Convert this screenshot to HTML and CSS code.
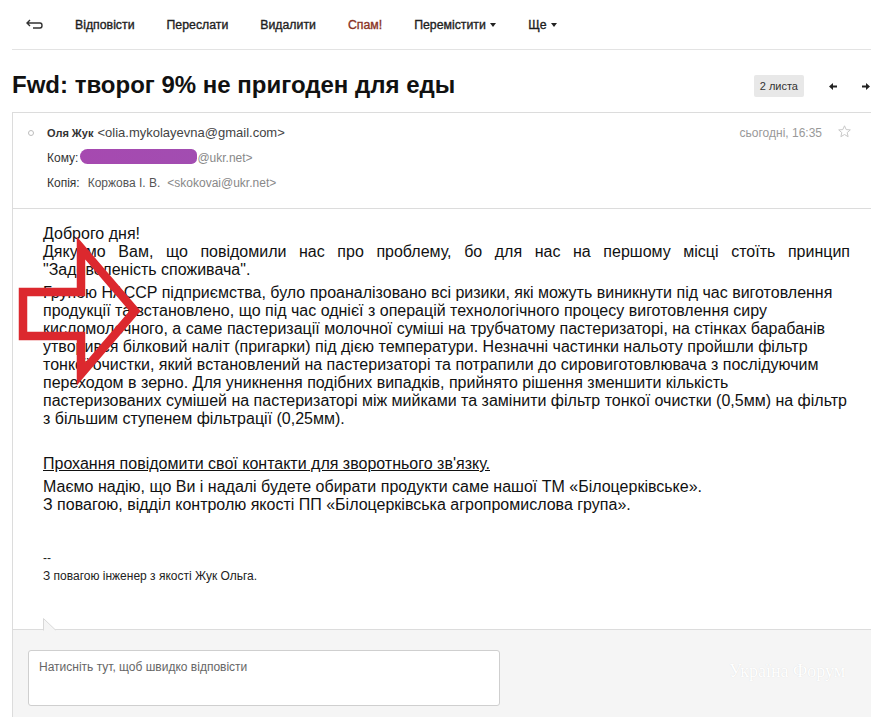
FILE: index.html
```html
<!DOCTYPE html>
<html lang="uk">
<head>
<meta charset="utf-8">
<title>Fwd: творог 9% не пригоден для еды</title>
<link rel="stylesheet" href="styles.css">
</head>
<body>
<div class="page">
  <div class="toolbar">
    <span class="back"><svg width="17" height="11" viewBox="0 0 17 11"><path d="M4 1 L1 4 L4 7 M1 4 H14 Q16 4 16 6.5 Q16 9 14 9 H7" fill="none" stroke="#333" stroke-width="1.4"/></svg></span>
    <span class="tb">Відповісти</span>
    <span class="tb">Переслати</span>
    <span class="tb">Видалити</span>
    <span class="tb spam">Спам!</span>
    <span class="tb">Перемістити <i class="caret"></i></span>
    <span class="tb">Ще <i class="caret"></i></span>
  </div>

  <div class="titlebar">
    <h1 class="title">Fwd: творог 9% не пригоден для еды</h1>
    <span class="count">2 листа</span>
    <span class="nav"><svg width="8" height="7" viewBox="0 0 8 7"><path d="M0 3.5 L4 0 V2.6 H8 V4.4 H4 V7 Z" fill="#222"/></svg></span>
    <span class="nav nav-next"><svg width="8" height="7" viewBox="0 0 8 7"><path d="M8 3.5 L4 0 V2.6 H0 V4.4 H4 V7 Z" fill="#222"/></svg></span>
  </div>

  <div class="card">
    <div class="head">
      <div class="row">
        <span class="dot"></span>
        <b class="from">Оля Жук</b>
        <span class="addr">&lt;olia.mykolayevna@gmail.com&gt;</span>
        <span class="date">сьогодні, 16:35</span>
        <span class="star"><svg width="13" height="13" viewBox="0 0 13 13"><path d="M6.5 0.8 L8.2 4.6 L12.3 4.9 L9.2 7.6 L10.1 11.7 L6.5 9.5 L2.9 11.7 L3.8 7.6 L0.7 4.9 L4.8 4.6 Z" fill="none" stroke="#c8c8c8" stroke-width="1"/></svg></span>
      </div>
      <div class="row sub">
        <span class="label">Кому:</span><span class="blob"></span><span class="muted">@ukr.net&gt;</span>
      </div>
      <div class="row sub">
        <span class="label">Копія:</span><span class="cc">Коржова І. В.</span><span class="muted">&lt;skokovai@ukr.net&gt;</span>
      </div>
    </div>

    <div class="msg">
      <p class="para just">Доброго дня!<br>Дякуємо Вам, що повідомили нас про проблему, бо для нас на першому місці стоїть принцип "Задоволеність споживача".</p>
      <p class="para gap nowrap">Групою HACCP підприємства, було проаналізовано всі ризики, які можуть виникнути під час виготовлення<br>продукції та встановлено, що під час однієї з операцій технологічного процесу виготовлення сиру<br>кисломолочного, а саме пастеризації молочної суміші на трубчатому пастеризаторі, на стінках барабанів<br>утворився білковий наліт (пригарки) під дією температури. Незначні частинки нальоту пройшли фільтр<br>тонкої очистки, який встановлений на пастеризаторі та потрапили до сировиготовлювача з послідуючим<br>переходом в зерно. Для уникнення подібних випадків, прийнято рішення зменшити кількість<br>пастеризованих сумішей на пастеризаторі між мийками та замінити фільтр тонкої очистки (0,5мм) на фільтр<br>з більшим ступенем фільтрації (0,25мм).</p>
      <p class="para request"><u>Прохання повідомити свої контакти для зворотнього зв'язку.</u></p>
      <p class="para gap">Маємо надію, що Ви і надалі будете обирати продукти саме нашої ТМ «Білоцерківське».<br>З повагою, відділ контролю якості ПП «Білоцерківська агропромислова група».</p>
      <p class="sig">--<br>З повагою інженер з якості Жук Ольга.</p>

      <svg class="mark" width="140" height="150" viewBox="10 235 140 150"><path d="M23 291 H81 V247 L135 310 L81 373 V335 H23 Z" fill="none" stroke="#dc282e" stroke-width="8.5" stroke-linejoin="miter"/></svg>
    </div>

    <div class="reply">
      <svg class="notch" width="13" height="13" viewBox="0 0 13 13"><path d="M0.5 13 V0.5 L12.5 12 V13 Z" fill="#f5f5f5"/><path d="M0.5 12.5 V0.5 L12.5 12" fill="none" stroke="#d8d8d8" stroke-width="1"/></svg>
      <div class="box">Натисніть тут, щоб швидко відповісти</div>
      <span class="watermark">Україна Форум</span>
    </div>
  </div>
</div>
</body>
</html>
```

FILE: styles.css
```css
html, body {
  margin: 0;
  padding: 0;
  background: #fff;
}

body {
  font-family: "Liberation Sans", Arial, sans-serif;
  color: #222;
}

.page {
  position: relative;
  width: 871px;
  height: 717px;
  overflow: hidden;
}

/* toolbar */
.toolbar {
  margin-left: 12px;
  height: 49px;
  border-bottom: 1px solid #e3e3e3;
  display: flex;
  align-items: center;
  gap: 32px;
  padding-left: 14px;
  font-size: 12.3px;
  color: #1e1e1e;
  -webkit-text-stroke: 0.35px #1e1e1e;
}

.back {
  display: flex;
  align-items: center;
  height: 11px;
}

.tb {
  white-space: nowrap;
}

.spam {
  color: #8a3324;
  -webkit-text-stroke: 0.35px #8a3324;
}

.caret {
  display: inline-block;
  width: 0;
  height: 0;
  border-left: 3.5px solid transparent;
  border-right: 3.5px solid transparent;
  border-top: 4px solid #222;
  vertical-align: middle;
  margin-left: 1px;
}

/* title */
.titlebar {
  margin-left: 12px;
  height: 62px;
  box-sizing: border-box;
  padding-top: 8px;
  padding-right: 1px;
  display: flex;
  align-items: center;
}

.title {
  margin: 0;
  font-size: 24px;
  font-weight: bold;
  color: #111;
  white-space: nowrap;
}

.count {
  margin-left: auto;
  background: #e8e8e8;
  border-radius: 2px;
  font-size: 11px;
  color: #333;
  height: 22px;
  line-height: 22px;
  padding: 0 6px;
  margin-top: 2px;
}

.nav {
  display: flex;
  margin-left: 25px;
  margin-top: 2px;
}

.nav-next {
  margin-left: 25px;
}

/* card */
.card {
  margin-left: 12px;
  border-left: 1px solid #dcdcdc;
  border-top: 1px solid #dcdcdc;
}

.head {
  padding: 7px 20px 13px 15px;
  border-bottom: 1px solid #dcdcdc;
  font-size: 12px;
}

.row {
  height: 25px;
  display: flex;
  align-items: center;
  white-space: nowrap;
}

.row.sub {
  padding-left: 19px;
}

.dot {
  width: 4px;
  height: 4px;
  border: 1px solid #bdbdbd;
  border-radius: 50%;
  margin-right: 13px;
}

.from {
  color: #333;
  font-size: 11px;
  margin-right: 4px;
}

.addr {
  color: #444;
  font-size: 13px;
}

.date {
  margin-left: auto;
  color: #999;
  margin-right: 16px;
}

.star {
  display: flex;
  margin-top: -3px;
}

.label {
  color: #333;
}

.blob {
  display: inline-block;
  width: 117px;
  height: 15px;
  border-radius: 8px 6px 6px 8px;
  background: linear-gradient(90deg, #a649b0, #a24db1);
  margin-left: 2px;
  margin-top: -2px;
}

.muted {
  color: #888;
}

.cc {
  color: #555;
  margin-left: 8px;
  margin-right: 7px;
}

/* message body */
.msg {
  position: relative;
  width: 807px;
  padding: 16px 0 44px 30px;
  font-size: 16px;
  line-height: 18px;
  color: #111;
}

.para {
  margin: 0;
}

.just {
  text-align: justify;
}

.gap {
  margin-top: 5px;
}

.nowrap {
  white-space: nowrap;
}

.request {
  margin-top: 27px;
}

.sig {
  margin: 35px 0 0;
  font-size: 12px;
  line-height: 18px;
  color: #222;
}

.mark {
  position: absolute;
  left: -3px;
  top: 27px;
}

/* reply area */
.reply {
  position: relative;
  background: #f5f5f5;
  border-top: 1px solid #dcdcdc;
  padding: 20px 0 14px 15px;
}

.notch {
  position: absolute;
  left: 30px;
  top: -12px;
}

.box {
  width: 472px;
  height: 56px;
  box-sizing: border-box;
  border: 1px solid #cfcfcf;
  border-radius: 3px;
  background: #fff;
  padding: 9px 10px;
  font-size: 12px;
  line-height: 14px;
  color: #666;
}

.watermark {
  position: absolute;
  left: 716px;
  top: 31px;
  font-family: "Liberation Serif", "Times New Roman", serif;
  font-size: 18px;
  color: #fff;
  text-shadow: 0 0 1px rgba(0, 0, 0, 0.12);
}
```
